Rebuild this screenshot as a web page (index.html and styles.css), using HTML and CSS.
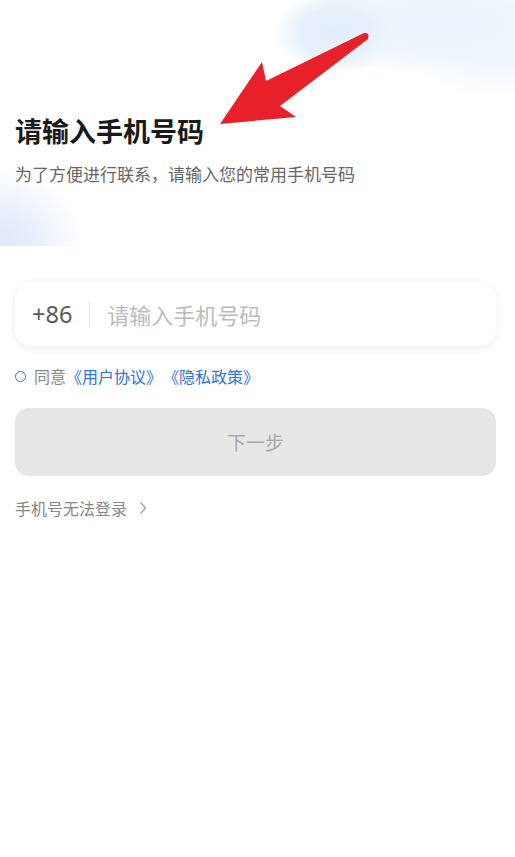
FILE: index.html
```html
<!DOCTYPE html>
<html lang="zh-CN">
<head>
	<meta charset="UTF-8">
	<title>手机号登录</title>
	<link rel="stylesheet" href="styles.css">
</head>
<body>
	<div class="page">
		<!-- 顶部标题 -->
		<div class="hero">
			<h1>请输入手机号码</h1>
			<p class="sub">为了方便进行联系，请输入您的常用手机号码</p>
			<svg class="arrow" width="160" height="100" viewBox="210 30 160 100">
				<path d="M220 124 L262 62 L266 81 L364 33 Q370 32 368 39 L280 106 L296 117 Z" fill="#e8202a"/>
			</svg>
		</div>
		<!-- 表单 -->
		<div class="form">
			<div class="phone">
				<span class="code">+86</span>
				<span class="line"></span>
				<input type="text" placeholder="请输入手机号码">
			</div>
			<div class="agree">
				<span class="radio"></span>
				<span class="gray">同意</span><a href="#">《用户协议》</a><a href="#" class="second">《隐私政策》</a>
			</div>
			<div class="btn">下一步</div>
			<div class="help">手机号无法登录<svg width="8" height="14" viewBox="0 0 8 14"><path d="M1.5 1.5 L6.5 7 L1.5 12.5" fill="none" stroke="#999" stroke-width="1.2"/></svg></div>
		</div>
	</div>
</body>
</html>
```

FILE: styles.css
```css
body {
	margin: 0;
	padding: 0;
	background-color: #FFF;
	font-family: "Noto Sans CJK SC", "Noto Sans", sans-serif;
}

.page {
	width: 515px;
	height: 857px;
	overflow: hidden;
}

.hero {
	position: relative;
	height: 246px;
	padding: 112px 15px 0;
	box-sizing: border-box;
	background:
		radial-gradient(ellipse 62px 42px at 335px 33px, #e4eefa 0%, #e8f1fb 60%, rgba(240, 246, 253, 0) 100%),
		radial-gradient(ellipse 150px 52px at 440px 24px, #eaf3fc 0%, #eef5fc 60%, rgba(244, 248, 253, 0) 100%),
		radial-gradient(ellipse 80px 40px at 500px 60px, #eef5fc 0%, rgba(244, 248, 253, 0) 100%),
		radial-gradient(ellipse 85px 80px at 0 246px, #dfe8f8 0%, #e9f0fb 45%, rgba(246, 249, 254, 0) 100%);
}

.hero h1 {
	margin: 0;
	font-size: 27px;
	line-height: 38px;
	font-weight: bold;
	color: #1a1a1a;
}

.hero .sub {
	margin: 12px 0 0;
	font-size: 17px;
	line-height: 24px;
	color: #666;
}

.arrow {
	position: absolute;
	left: 210px;
	top: 30px;
}

.form {
	padding: 36px 19px 0 15px;
}

.phone {
	display: flex;
	align-items: center;
	height: 64px;
	padding: 0 17px;
	border-radius: 16px;
	background-color: #FFF;
	box-shadow: 0 2px 10px rgba(0, 0, 0, 0.07);
}

.phone .code {
	font-family: "Noto Sans", sans-serif;
	font-size: 23.5px;
	color: #5a5a5a;
}

.phone .line {
	width: 1px;
	height: 26px;
	margin: 0 17px 0 17px;
	background-color: #e8e8e8;
}

.phone input {
	flex: 1;
	border: none;
	outline: none;
	padding: 0;
	font-family: inherit;
	font-size: 22px;
	color: #333;
	background: transparent;
}

.phone input::placeholder {
	color: #bbb;
}

.agree {
	display: flex;
	align-items: center;
	margin-top: 19px;
	height: 22px;
	font-size: 16px;
}

.agree .radio {
	width: 9px;
	height: 9px;
	border: 1.7px solid #2f73e0;
	border-radius: 50%;
	margin-right: 8px;
}

.agree .gray {
	color: #888;
}

.agree a {
	color: #2f73e0;
	text-decoration: none;
}

.agree .second {
	margin-left: 1px;
}

.btn {
	margin-top: 21px;
	height: 68px;
	line-height: 68px;
	border-radius: 14px;
	background-color: #e6e6e6;
	text-align: center;
	font-size: 19px;
	color: #aaa;
}

.help {
	display: flex;
	align-items: center;
	margin-top: 20px;
	height: 24px;
	font-size: 16px;
	color: #888;
}

.help svg {
	margin-left: 12px;
}
```
